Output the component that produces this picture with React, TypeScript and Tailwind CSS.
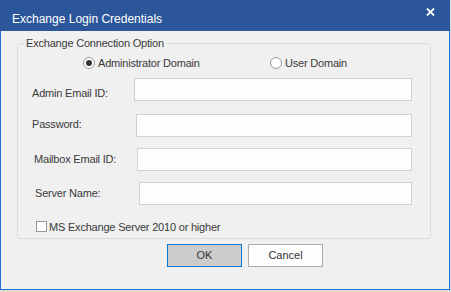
import { useState } from 'react'

const font = { fontFamily: '"Liberation Sans", Arial, sans-serif' }

function Field({ label, labelLeft, labelTop, inputLeft, first }: {
  label: string
  labelLeft: string
  labelTop: string
  inputLeft: string
  first?: boolean
}) {
  return (
    <div className={`flex h-[23px] ${first ? 'mt-[8px]' : 'mt-[11px]'}`}>
      <label className={`${labelLeft} ${labelTop} ${inputLeft} shrink-0 text-[11px] leading-[14px] tracking-[-0.2px] text-[#3a3a3a]`}>
        {label}
      </label>
      <input className="flex-1 mr-[18px] h-[23px] border border-[#d0d0d0] bg-[#fdfdfd] outline-none" />
    </div>
  )
}

export default function App() {
  const [domain, setDomain] = useState<'admin' | 'user'>('admin')
  const [modern, setModern] = useState(false)

  return (
    <div className="w-[451px] h-[292px] bg-[#dadada]" style={font}>
      <div className="w-[450px] h-[290px] flex flex-col bg-[#f0f0f0] border-x border-b border-[#1f6fd6]">
        {/* title bar */}
        <div className="h-[31px] -mx-px flex justify-between bg-[#2b579a] text-white">
          <div className="pl-[12px] pt-[12px] text-[12px] leading-[14px]">Exchange Login Credentials</div>
          <button className="mr-[15px] mt-[8px] w-[9px] h-[8px]">
            <svg width="9" height="8" viewBox="0 0 9 8">
              <path d="M1 0.5 L8 7.5 M8 0.5 L1 7.5" stroke="white" strokeWidth="1.8" />
            </svg>
          </button>
        </div>

        <div className="pt-[5px] pl-[16px]">
          <fieldset className="w-[414px] border border-[#dcdcdc] rounded-[3px] pb-[4px]">
            <legend className="ml-[6px] px-[2px] text-[11px] leading-[14px] tracking-[-0.2px] text-[#3a3a3a]">
              Exchange Connection Option
            </legend>

            {/* radios */}
            <div className="flex mt-[6px] h-[14px] text-[11px] leading-[14px] tracking-[-0.2px] text-[#3a3a3a]">
              <label className="ml-[65px] w-[187px] flex items-center gap-[3px]" onClick={() => setDomain('admin')}>
                <span className="w-[12px] h-[12px] rounded-full border border-[#999] bg-white flex items-center justify-center">
                  {domain === 'admin' && <span className="w-[6px] h-[6px] rounded-full bg-[#333]" />}
                </span>
                Administrator Domain
              </label>
              <label className="flex items-center gap-[3px]" onClick={() => setDomain('user')}>
                <span className="w-[12px] h-[12px] rounded-full border border-[#999] bg-white flex items-center justify-center">
                  {domain === 'user' && <span className="w-[6px] h-[6px] rounded-full bg-[#333]" />}
                </span>
                User Domain
              </label>
            </div>

            <Field first label="Admin Email ID:" labelLeft="ml-[14px]" labelTop="pt-[8px]" inputLeft="w-[102px]" />
            <div className="h-[2px]" />
            <Field label="Password:" labelLeft="ml-[14px]" labelTop="pt-[3px]" inputLeft="w-[104px]" />
            <Field label="Mailbox Email ID:" labelLeft="ml-[16px]" labelTop="pt-[4px]" inputLeft="w-[103px]" />
            <Field label="Server Name:" labelLeft="ml-[17px]" labelTop="pt-[4px]" inputLeft="w-[104px]" />

            {/* checkbox */}
            <label className="flex mt-[15px] ml-[18px] h-[14px] gap-[2px] text-[11px] leading-[14px] tracking-[-0.2px] text-[#3a3a3a]" onClick={() => setModern(!modern)}>
              <span className="mt-[1px] w-[11px] h-[11px] border border-[#999] bg-white flex items-center justify-center">
                {modern && (
                  <svg width="9" height="9" viewBox="0 0 9 9">
                    <path d="M1 4.5 L3.5 7 L8 1.5" stroke="#333" strokeWidth="1.3" fill="none" />
                  </svg>
                )}
              </span>
              MS Exchange Server 2010 or higher
            </label>
          </fieldset>
        </div>

        {/* buttons */}
        <div className="flex gap-[6px] pl-[166px] mt-[5px]">
          <button className="w-[75px] h-[23px] bg-[#cccccc] border border-[#0078d7] text-[11px] text-[#333]">OK</button>
          <button className="w-[75px] h-[23px] bg-[#fdfdfd] border border-[#adadad] text-[11px] text-[#333]">Cancel</button>
        </div>
      </div>
    </div>
  )
}
